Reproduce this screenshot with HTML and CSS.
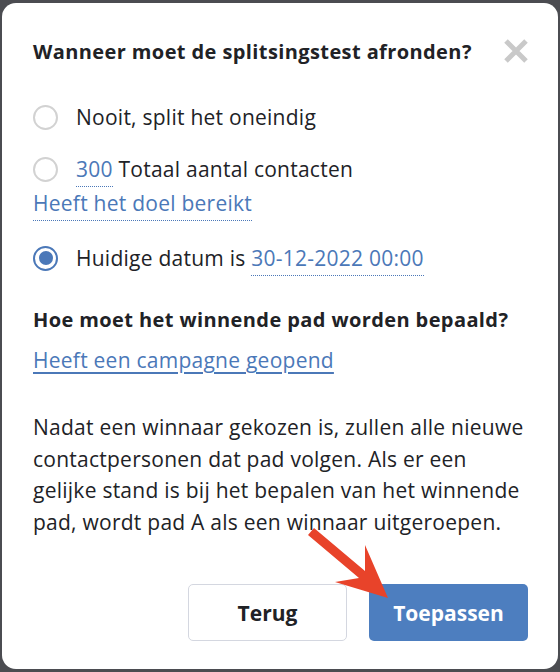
FILE: index.html
```html
<!DOCTYPE html>
<html lang="nl">
<head>
  <meta charset="UTF-8" />
  <meta name="viewport" content="width=device-width, initial-scale=1.0" />
  <title>Splitsingstest</title>
  <link rel="stylesheet" href="styles.css">
</head>
<body>
  <div class="modal">
    <div class="modal-body">
      <div class="title-row">
        <h2>Wanneer moet de splitsingstest afronden?</h2>
        <button class="close" aria-label="Sluiten">
          <svg width="26" height="26" viewBox="0 0 26 26">
            <path d="M3 3 L23 23 M23 3 L3 23" stroke="#c9c9c9" stroke-width="5" stroke-linecap="butt" />
          </svg>
        </button>
      </div>

      <div class="option first">
        <span class="radio"></span>
        <span>Nooit, split het oneindig</span>
      </div>
      <div class="option">
        <span class="radio"></span>
        <span><span class="editable">300</span> Totaal aantal contacten</span>
      </div>
      <div class="goal"><span class="editable">Heeft het doel bereikt</span></div>
      <div class="option last">
        <span class="radio checked"></span>
        <span>Huidige datum is <span class="editable">30-12-2022 00:00</span></span>
      </div>

      <h3>Hoe moet het winnende pad worden bepaald?</h3>
      <a href="#" class="link">Heeft een campagne geopend</a>

      <p class="info">Nadat een winnaar gekozen is, zullen alle nieuwe contactpersonen dat pad volgen. Als er een gelijke stand is bij het bepalen van het winnende pad, wordt pad A als een winnaar uitgeroepen.</p>
    </div>

    <div class="modal-footer">
      <button class="btn btn-back">Terug</button>
      <button class="btn btn-apply">Toepassen</button>
    </div>

    <!-- red pointer arrow drawn over the footer -->
    <svg class="arrow" width="100" height="80" viewBox="0 0 100 80">
      <polygon points="3,10 9,3 60,46 60,20 83,73 30,57 54,53" fill="#e8432a" />
    </svg>
  </div>
</body>
</html>
```

FILE: styles.css
```css
* {
  box-sizing: border-box;
}
body {
  margin: 0;
  padding: 3px 2px 3px 2px;
  background-color: #4b4c51;
  font-family: "Open Sans", sans-serif;
  color: #212226;
}
.modal {
  position: relative;
  width: 556px;
  height: 666px;
  background: #fff;
  border-radius: 14px;
  display: flex;
  flex-direction: column;
}
.modal-body {
  flex: 1;
  padding: 30px 30px 0 31px;
}
.title-row {
  display: flex;
  justify-content: space-between;
  align-items: center;
  height: 36px;
}
h2, h3 {
  margin: 0;
  font-size: 20px;
  font-weight: 700;
  letter-spacing: 0.4px;
}
.close {
  border: none;
  background: none;
  padding: 0;
  margin-right: -1px;
  width: 26px;
  height: 26px;
  cursor: pointer;
}
.option {
  display: flex;
  align-items: center;
  gap: 18px;
  font-size: 21px;
  letter-spacing: 0.25px;
  margin-top: 16px;
  height: 36px;
}
.option.first {
  margin-top: 30px;
}
.radio {
  width: 25px;
  height: 25px;
  border-radius: 50%;
  border: 2px solid #d2d2d2;
  display: flex;
  align-items: center;
  justify-content: center;
  flex-shrink: 0;
}
.radio.checked {
  border-color: #4b78b8;
}
.radio.checked::after {
  content: "";
  width: 14px;
  height: 14px;
  border-radius: 50%;
  background: #4b78b8;
}
.editable {
  color: #4b78b8;
  border-bottom: 1px dotted #4b78b8;
  padding-bottom: 3px;
}
.goal {
  font-size: 21px;
  letter-spacing: 0.25px;
  height: 32px;
  line-height: 32px;
  margin-top: 0;
}
.option.last {
  margin-top: 21px;
}
h3 {
  margin-top: 31px;
  line-height: 26px;
}
.link {
  display: inline-block;
  margin-top: 13px;
  font-size: 21px;
  letter-spacing: 0.25px;
  color: #4b78b8;
  text-underline-offset: 4px;
}
.info {
  font-size: 21px;
  letter-spacing: 0.25px;
  line-height: 31.7px;
  margin: 38px 0 0 0;
}
.modal-footer {
  display: flex;
  justify-content: flex-end;
  gap: 22px;
  padding: 0 30px 28px 0;
}
.btn {
  width: 159px;
  height: 57px;
  border-radius: 5px;
  font-family: "Open Sans", sans-serif;
  font-size: 21px;
  font-weight: 700;
  cursor: pointer;
}
.btn-back {
  background: #fff;
  border: 1px solid #d4d7e0;
  color: #212226;
}
.btn-apply {
  background: #4d7ebf;
  border: none;
  color: #fff;
}
.arrow {
  position: absolute;
  left: 303px;
  top: 522px;
}
```
